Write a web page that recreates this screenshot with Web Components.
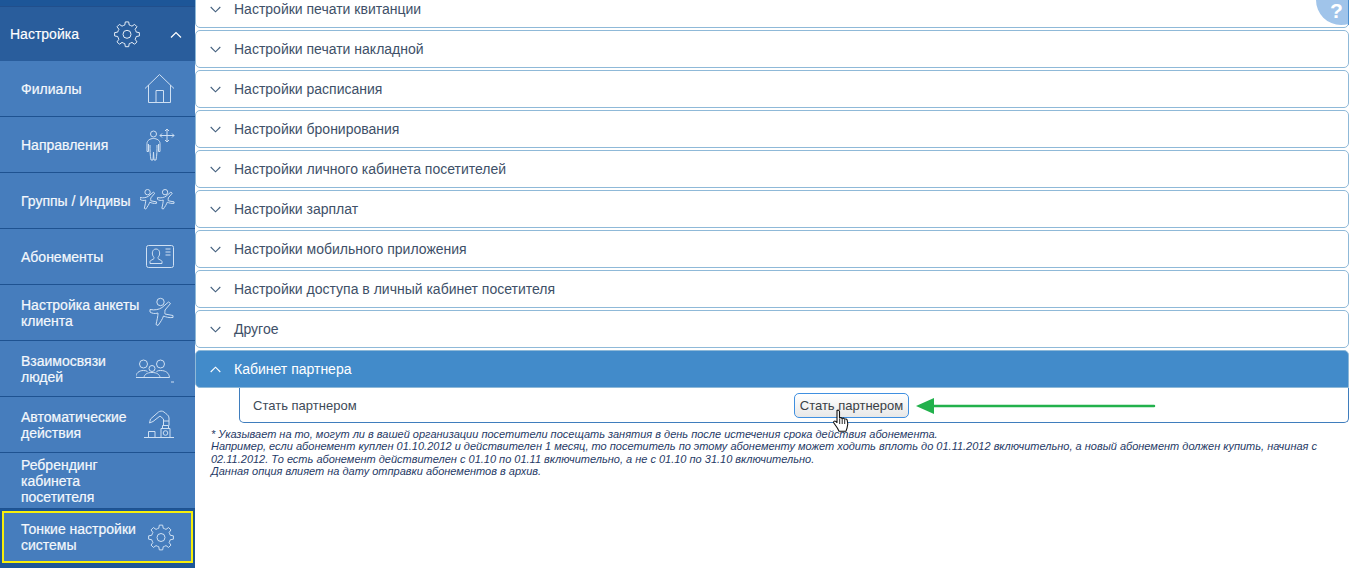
<!DOCTYPE html>
<html lang="ru"><head><meta charset="utf-8"><title>Настройка</title>
<style>
html,body{margin:0;padding:0;height:568px;overflow:hidden;background:#fff;font-family:"Liberation Sans",Arial,sans-serif}
</style></head><body>
<x-app>
  <x-sidebar slot="side">
    <x-nav-head>Настройка</x-nav-head>
    <x-nav-item icon="home">Филиалы</x-nav-item>
    <x-nav-item icon="person">Направления</x-nav-item>
    <x-nav-item icon="group">Группы / Индивы</x-nav-item>
    <x-nav-item icon="card">Абонементы</x-nav-item>
    <x-nav-item icon="client">Настройка анкеты клиента</x-nav-item>
    <x-nav-item icon="people">Взаимосвязи людей</x-nav-item>
    <x-nav-item icon="robot">Автоматические действия</x-nav-item>
    <x-nav-item>Ребрендинг кабинета посетителя</x-nav-item>
    <x-nav-item icon="gear" highlight>Тонкие настройки системы</x-nav-item>
  </x-sidebar>
  <x-accordion slot="main">
    <x-acc-row>Настройки печати квитанции</x-acc-row>
    <x-acc-row>Настройки печати накладной</x-acc-row>
    <x-acc-row>Настройки расписания</x-acc-row>
    <x-acc-row>Настройки бронирования</x-acc-row>
    <x-acc-row>Настройки личного кабинета посетителей</x-acc-row>
    <x-acc-row>Настройки зарплат</x-acc-row>
    <x-acc-row>Настройки мобильного приложения</x-acc-row>
    <x-acc-row>Настройки доступа в личный кабинет посетителя</x-acc-row>
    <x-acc-row>Другое</x-acc-row>
    <x-acc-row open>Кабинет партнера</x-acc-row>
    <x-partner-panel label="Стать партнером">Стать партнером</x-partner-panel>
    <x-note>
      * Указывает на то, могут ли в вашей организации посетители посещать занятия в день после истечения срока действия абонемента.<br>
      Например, если абонемент куплен 01.10.2012 и действителен 1 месяц, то посетитель по этому абонементу может ходить вплоть до 01.11.2012 включительно, а новый абонемент должен купить, начиная с 02.11.2012. То есть абонемент действителен с 01.10 по 01.11 включительно, а не с 01.10 по 31.10 включительно.<br>
      Данная опция влияет на дату отправки абонементов в архив.
    </x-note>
  </x-accordion>
  <x-help slot="over">?</x-help>
</x-app>
<script>
function gearPath(cx,cy,R,r,n){
  let d='';const step=Math.PI*2/n;
  for(let i=0;i<n;i++){
    const a=i*step-Math.PI/2;
    const pts=[[r,a-step*.30],[R,a-step*.17],[R,a+step*.17],[r,a+step*.30]];
    pts.forEach((p,j)=>{
      const x=(cx+p[0]*Math.cos(p[1])).toFixed(2),y=(cy+p[0]*Math.sin(p[1])).toFixed(2);
      if(i===0&&j===0)d+=`M${x} ${y}`;
      else if(j===0)d+=`A${r} ${r} 0 0 1 ${x} ${y}`;
      else d+=`L${x} ${y}`;
    });
  }
  const x0=(cx+r*Math.cos(-Math.PI/2-step*.30)).toFixed(2),y0=(cy+r*Math.sin(-Math.PI/2-step*.30)).toFixed(2);
  return d+`A${r} ${r} 0 0 1 ${x0} ${y0}Z`;
}
const FIG='M150 309.500C155 310.500 159 309.500 162 307.500L168.500 302 170.500 303.500 165 310C165 312 164.500 313 165 314L173 315.500V317.500C169 318 166 317 163.500 316C162.500 319 160.500 322 158 325.500L156 324.500C157 320 158 316 158 313C155 314 152 313.500 150 312Z';
const dancer=(tx)=>`<g transform="translate(${tx} 190) scale(.72) translate(-150 -299)"><circle cx="160.500" cy="302" r="3.700" vector-effect="non-scaling-stroke"/><path d="${FIG}" vector-effect="non-scaling-stroke"/></g>`;
const ICONS={
 home:['140 72 36 33',`<path d="M145 88.500 159.500 74.500 174 88.500"/><path d="M148.500 85v17.500h22V85"/><path d="M156 102.500V90.500h7.500v12"/>`],
 person:['140 128 36 33',`<circle cx="153.500" cy="134" r="3"/><path d="M147 151.500V143.500C147 140.500 150 138.500 153.500 138.500S160 140.500 160 143.500V151.500H158.500V144M147 151.500H148.500V144M150 145C150 150 150 155 151 160H153L153.500 152 154 160H156C157 155 157 150 157 145"/><path d="M167 129v13M160 135.500h14M165 131l2-2 2 2M165 140l2 2 2-2M162 133.500l-2 2 2 2M172 133.500l2 2-2 2"/>`],
 group:['140 189 36 23',dancer(140)+dancer(157.500)],
 card:['140 240 36 33',`<rect x="146.500" y="245.500" width="27" height="22" rx="2"/><path d="M150 263.500v-2c0-1.300 3.400-1.800 4-3 .3-.8-.2-1.400-1-2.500-1.200-2-1-7 3-7s4.200 5 3 7c-.8 1.100-1.300 1.700-1 2.500.6 1.200 4 1.700 4 3v2zM165.500 252h5M165.500 255h5M165.500 249h5"/>`],
 client:['140 296 36 33',`<circle cx="160.500" cy="302" r="3.700"/><path d="${FIG}"/>`],
 people:['136 352 40 33',`<circle cx="143.500" cy="364" r="4"/><circle cx="160.500" cy="364" r="4"/><circle cx="152" cy="368.500" r="3"/><path d="M135.500 377.500c.5-4.500 3.500-7 8-7 1.700 0 3 .3 4 1M169.500 377.500c-.5-4.500-3.500-7-9-7-1.700 0-3 .3-4 1M144 377.500c.3-3 3-5 8-5s7.700 2 8 5M135.500 377.500h34M171 382h3"/>`],
 robot:['140 408 36 33',`<path d="M144 437.500h30M148.500 437.500v-6h6.500v6M161 437.500v-9h9v9M162.500 428.500v-3h6v3"/><circle cx="165.500" cy="433" r="2.300"/><path d="M169 425.500V418C169 415 166 414 164 412 162 410.500 160 411 158.500 412L150.500 419 149.500 423 153 421.500 160 416 163.500 419V425.500M163.500 421H169"/>`],
 gear:['140 520 36 33',`<path d="${gearPath(161,536.500,12.500,9.500,8)}"/><circle cx="161" cy="536.500" r="4"/>`],
 gearhead:['108 17 36 33',`<path d="${gearPath(127,33.300,12.500,9.500,8)}"/><circle cx="127" cy="33.300" r="4"/>`]
};
function iconSvg(name,color){
  const ic=ICONS[name],p=ic[0].split(' ');
  return `<svg viewBox="${ic[0]}" width="${p[2]}" height="${p[3]}" fill="none" stroke="${color||'#cfe0f3'}" stroke-width="1" aria-hidden="true">${ic[1]}</svg>`;
}
function def(name,html){
  customElements.define(name,class extends HTMLElement{
    constructor(){super();this.attachShadow({mode:'open'}).innerHTML=typeof html==='function'?html(this):html;}
  });
}
def('x-app',`<style>
:host{display:flex;width:1349px;height:568px;overflow:hidden;position:relative;font-family:"Liberation Sans",Arial,sans-serif}
</style><slot name="side"></slot><slot name="main"></slot><slot name="over"></slot>`);
def('x-sidebar',`<style>
:host{display:flex;flex-direction:column;flex:0 0 195px;width:195px;height:568px;box-sizing:border-box;padding-top:6px;background:#1d5698}
</style><slot></slot>`);
def('x-nav-head',()=>`<style>
:host{display:flex;align-items:center;height:55px;background:#295d9c;color:#fff;font-size:14px;padding-left:10px;box-sizing:border-box;border-top:1px solid #214f8c}
.t{flex:1;-webkit-text-stroke:.15px #fff}
svg{display:block}
.c{margin:2px 13px 0 26px}
</style><span class="t"><slot></slot></span>${iconSvg('gearhead','#e6eef7')}<svg class="c" width="12" height="8" viewBox="0 0 12 8" fill="none" stroke="#fff" stroke-width="1.200"><path d="M1 6.500 6 1.500 11 6.500"/></svg>`);
def('x-nav-item',(el)=>{
  const ic=el.getAttribute('icon');
  return `<style>
:host{display:block;height:56px;box-sizing:border-box;background:#467dbd;border-bottom:1px solid #1e5291;color:#f4f8fc;font-size:14px;line-height:16px}
.r{display:flex;align-items:center;justify-content:space-between;height:100%;box-sizing:border-box;padding:0 20px 0 21px}
.t{-webkit-text-stroke:.2px #f4f8fc;flex:1}
svg{display:block;flex:none;margin-right:-1px}
.sp{flex:none;width:36px}
:host([highlight]){height:55px;border-bottom:0;padding:2px 2px 1px;background-clip:content-box}
:host([highlight]) .r{border:2px solid #f7ee0a;padding:0 16px 0 17px}
</style><div class="r"><span class="t"><slot></slot></span>${ic?iconSvg(ic):'<span class="sp"></span>'}</div>`;
});
def('x-accordion',`<style>
:host{display:flex;flex-direction:column;flex:1;min-width:0;margin-top:-10px;gap:2px}
</style><slot></slot>`);
def('x-acc-row',(el)=>`<style>
:host{display:flex;align-items:center;height:38px;box-sizing:border-box;border:1px solid #8fb9d8;border-radius:5px;background:#fff;color:#3e5068;font-size:14px;padding-left:14px}
:host([open]){background:#428bca;color:#fff;border-radius:5px 5px 0 5px}
svg{display:block;margin-right:13px;flex:none}
</style><svg width="11" height="7" viewBox="0 0 11 7" fill="none" stroke="${el.hasAttribute('open')?'#fff':'#44607f'}" stroke-width="1.100">${el.hasAttribute('open')?'<path d="M.7 6 5.500 1.200 10.300 6"/>':'<path d="M.7 1 5.500 5.800 10.300 1"/>'}</svg><slot></slot>`);
def('x-partner-panel',(el)=>`<style>
:host{display:flex;align-items:center;height:35px;box-sizing:border-box;margin:-2px 0 0 44px;border:solid #3f7dbd;border-width:0 1px 1px 1px;border-radius:0 0 5px 5px;padding-left:13px;color:#3e4a58;font-size:13px;letter-spacing:.01px}
.l{width:541px;flex:none}
x-partner-button{flex:none}
svg.a{display:block;flex:none;margin:2px 0 0 7px}
</style><span class="l"><slot></slot></span><x-partner-button>${el.getAttribute('label')}</x-partner-button><svg class="a" width="240" height="18" viewBox="0 0 240 18" aria-hidden="true"><path d="M14 9H238" stroke="#22b14c" stroke-width="2.500" stroke-linecap="round"/><path d="M0 9 18 1V17Z" fill="#22b14c"/></svg>`);
def('x-partner-button',`<style>
:host{display:block;position:relative}
button{display:block;height:25px;width:115px;box-sizing:border-box;padding:0;border:1px solid #3f8fe0;border-radius:5px;background:linear-gradient(#fff,#e8e8e8);color:#3a3f46;font:13px "Liberation Sans",Arial,sans-serif;text-align:center}
svg{position:absolute;left:38px;top:16px;display:block}
</style><button><slot></slot></button><svg width="19" height="25" viewBox="0 0 19 25" aria-hidden="true"><path d="M5 1.500c1-.8 2.300-.3 2.500 1V9c1-.5 2-.3 2.500.5.900-.5 2-.2 2.500.7.900-.5 2.300-.1 2.700 1 .8 2.500.8 5.500-.2 8l-1 3H7l-1.500-3-3.800-5.500c-.6-1 .8-2.200 2-1.300L5 13.500V2.500z" fill="#fff" stroke="#111" stroke-width="1.100" stroke-linejoin="round"/><path d="M7.700 10v5M10.200 10v5M12.700 11v4" stroke="#111" stroke-width=".9"/></svg>`);
def('x-note',`<style>
:host{display:block;margin:3px 0 0 16px;padding-right:25px;font:italic 11px/12.400px "Liberation Sans",Arial,sans-serif;color:#1f3a66}
</style><slot></slot>`);
def('x-help',`<style>
:host{position:absolute;left:1316px;top:-25px;width:50px;height:50px;border-radius:50%;background:#a0c4ea;color:#fff;box-sizing:border-box;font:bold 21px/1 "Liberation Sans",Arial,sans-serif;padding:25px 0 0 14px}
:host::after{content:"";position:absolute;left:32px;top:25px;width:1px;height:25px;background:#4a8fd0}
</style><slot></slot>`);
</script>
</body></html>
